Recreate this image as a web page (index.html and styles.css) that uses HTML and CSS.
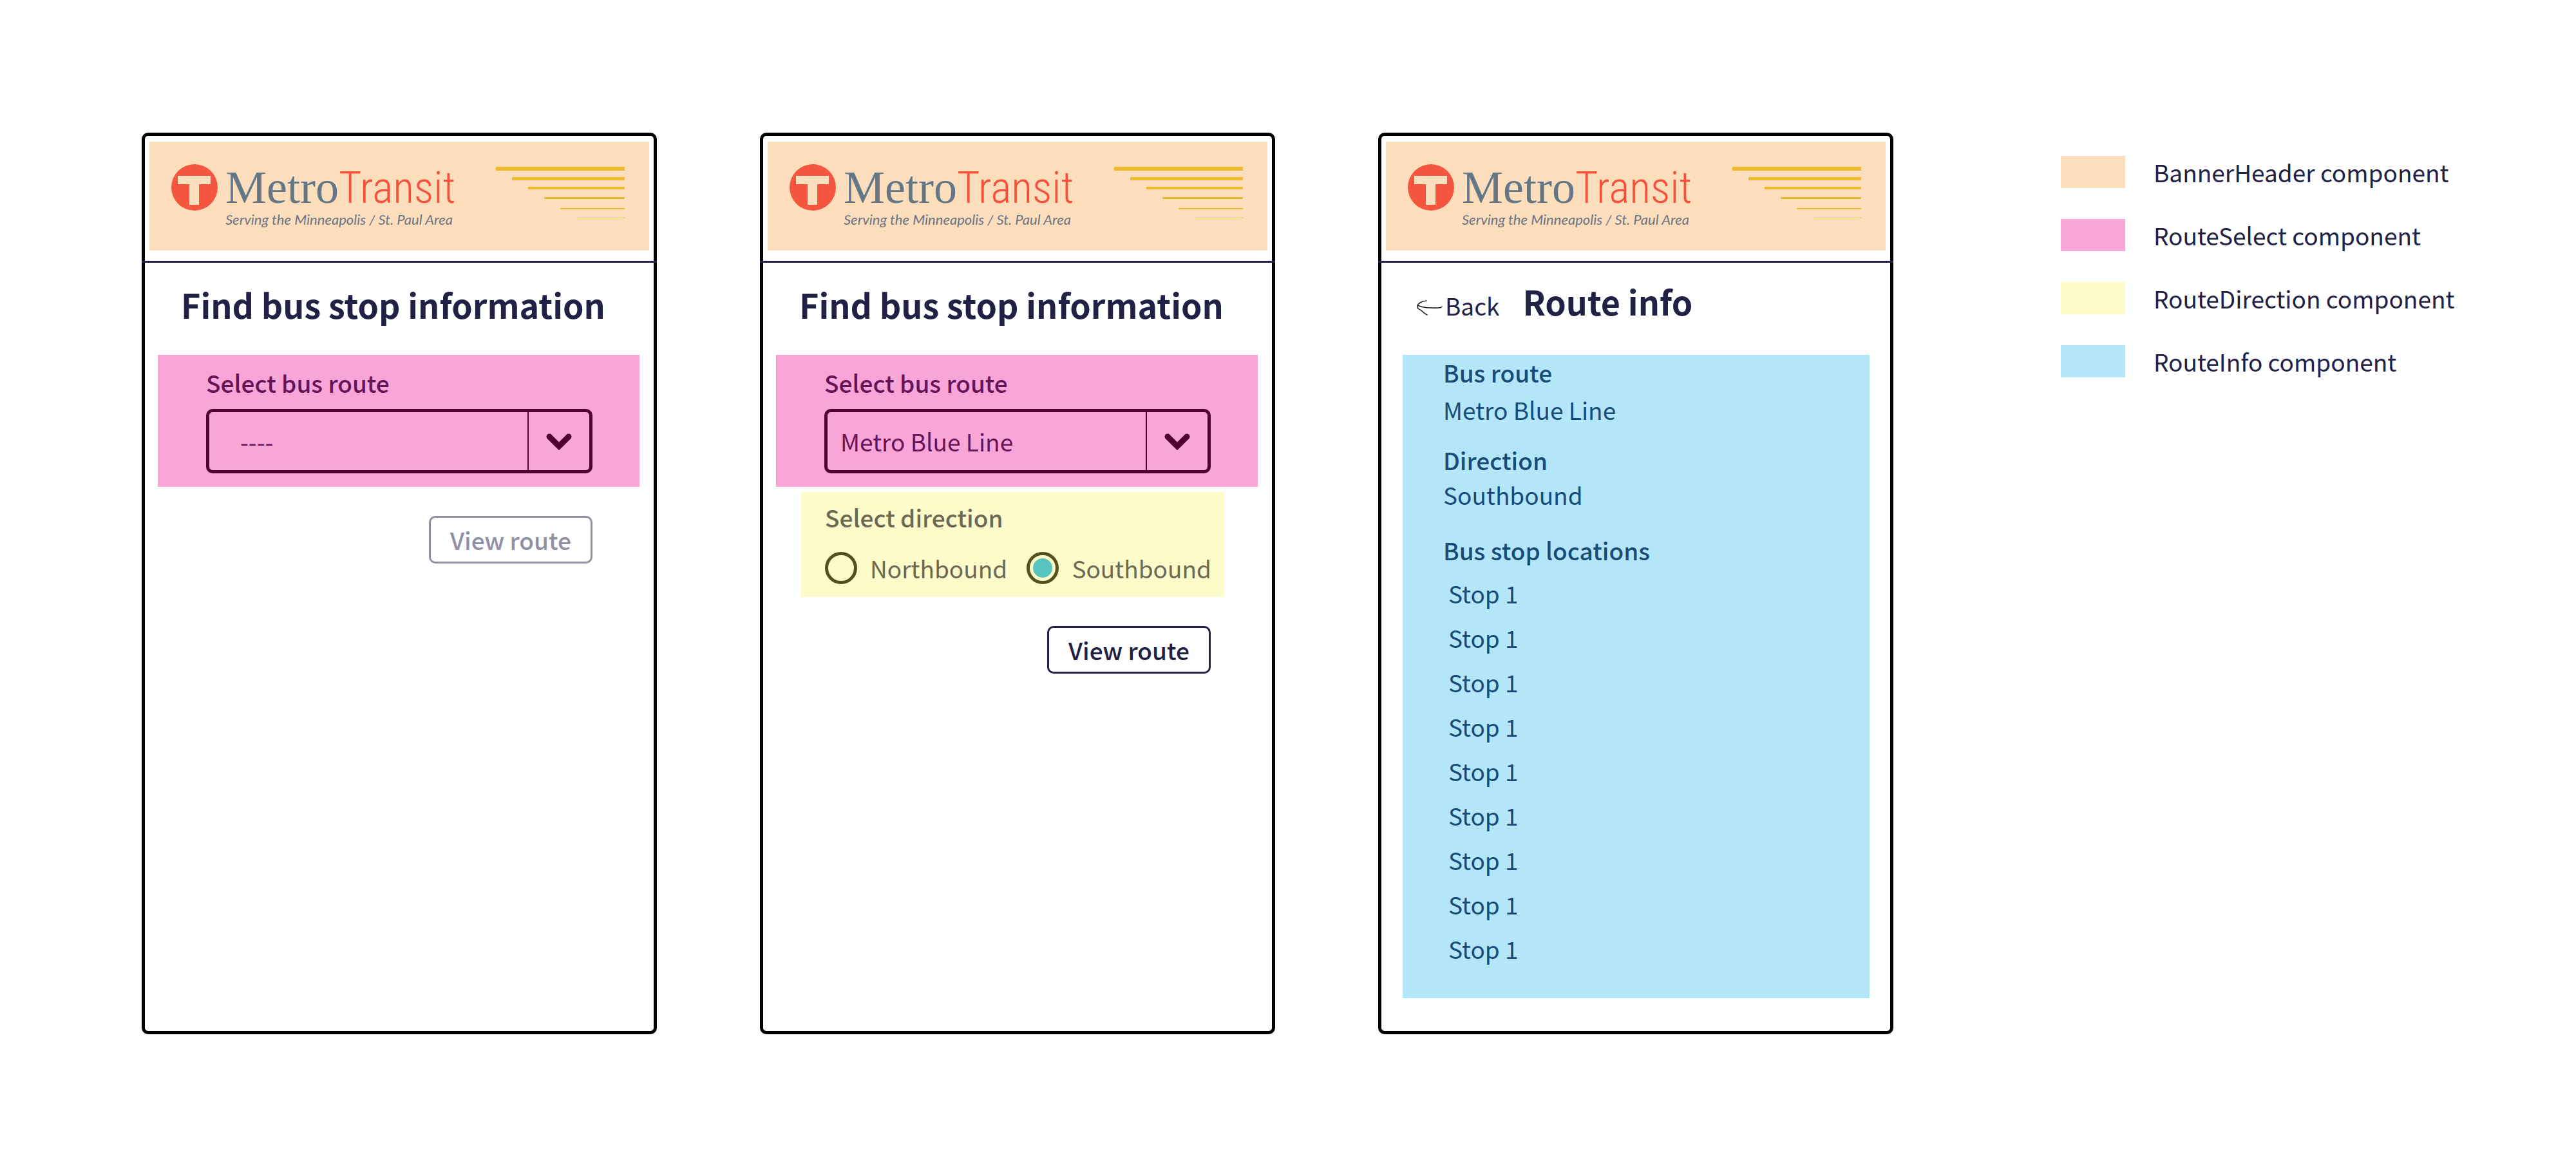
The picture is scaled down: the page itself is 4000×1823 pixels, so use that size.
FILE: index.html
```html
<!DOCTYPE html>
<html lang="en">
<head>
<meta charset="utf-8">
<meta name="viewport" content="width=device-width, initial-scale=1">
<title>Metro Transit wireframes</title>
<link rel="stylesheet" href="styles.css">
</head>
<body>
<svg width="0" height="0" class="sprite" aria-hidden="true">
  <symbol id="mark" viewBox="0 0 72 72">
    <circle cx="36" cy="36" r="36" fill="#f45640"/>
    <path d="M10 18h51v13H43v32H28V31H10z" fill="#fddebc"/>
  </symbol>
  <symbol id="speed" viewBox="0 0 200 80">
    <path d="M0 0h200v6H0zM25 16h175v5H25zM50 31h150v4H50zM75 47h125v3H75zM100 64h100v2H100zM126 79h74v1h-74z" fill="#edb92d"/>
  </symbol>
  <symbol id="chevron" viewBox="0 0 40 28">
    <path d="M5 5l15 15L35 5" fill="none" stroke="#50002d" stroke-width="9" stroke-linecap="round"/>
  </symbol>
</svg>

<main class="board">
  <section class="phone">
    <header class="phone__header">
      <div class="banner">
        <svg class="banner__mark" aria-hidden="true"><use href="#mark"/></svg>
        <div class="banner__text">
          <p class="banner__name"><span class="banner__metro">Metro</span><span class="banner__transit">Transit</span></p>
          <p class="banner__tagline">Serving the Minneapolis / St. Paul Area</p>
        </div>
        <svg class="banner__speed" aria-hidden="true"><use href="#speed"/></svg>
      </div>
    </header>
    <h1 class="title">Find bus stop information</h1>
    <form class="finder">
      <div class="route-select">
        <label class="label" for="route-a">Select bus route</label>
        <div class="picker picker--empty">
          <select class="picker__input" id="route-a"><option>----</option><option>Metro Blue Line</option></select>
          <svg class="picker__icon" aria-hidden="true"><use href="#chevron"/></svg>
        </div>
      </div>
      <button class="button" type="button" disabled>View route</button>
    </form>
  </section>

  <section class="phone">
    <header class="phone__header">
      <div class="banner">
        <svg class="banner__mark" aria-hidden="true"><use href="#mark"/></svg>
        <div class="banner__text">
          <p class="banner__name"><span class="banner__metro">Metro</span><span class="banner__transit">Transit</span></p>
          <p class="banner__tagline">Serving the Minneapolis / St. Paul Area</p>
        </div>
        <svg class="banner__speed" aria-hidden="true"><use href="#speed"/></svg>
      </div>
    </header>
    <h1 class="title">Find bus stop information</h1>
    <form class="finder">
      <div class="route-select">
        <label class="label" for="route-b">Select bus route</label>
        <div class="picker">
          <select class="picker__input" id="route-b"><option>Metro Blue Line</option></select>
          <svg class="picker__icon" aria-hidden="true"><use href="#chevron"/></svg>
        </div>
      </div>
      <fieldset class="route-direction">
        <legend class="label">Select direction</legend>
        <div class="choices">
          <label class="choice"><input class="choice__radio" type="radio" name="direction">Northbound</label>
          <label class="choice"><input class="choice__radio" type="radio" name="direction" checked>Southbound</label>
        </div>
      </fieldset>
      <button class="button" type="button">View route</button>
    </form>
  </section>

  <section class="phone">
    <header class="phone__header">
      <div class="banner">
        <svg class="banner__mark" aria-hidden="true"><use href="#mark"/></svg>
        <div class="banner__text">
          <p class="banner__name"><span class="banner__metro">Metro</span><span class="banner__transit">Transit</span></p>
          <p class="banner__tagline">Serving the Minneapolis / St. Paul Area</p>
        </div>
        <svg class="banner__speed" aria-hidden="true"><use href="#speed"/></svg>
      </div>
    </header>
    <div class="titlebar">
      <a class="back" href="#"><svg class="back__arrow" viewBox="0 0 40 24" aria-hidden="true"><path d="M39 10.500C37 13 30 12 22 12C14 12 7 11 1 8M15 1C8 2 2 5 1 9C0 15 5 13 9 18Q12 21 16 23" fill="none" stroke="#1c1c20" stroke-width="1.600" stroke-linecap="round"/></svg>Back</a>
      <h1 class="titlebar__title">Route info</h1>
    </div>
    <div class="route-info">
      <div class="fact fact--route">
        <h2 class="fact__name">Bus route</h2>
        <p class="fact__value">Metro Blue Line</p>
      </div>
      <div class="fact fact--direction">
        <h2 class="fact__name">Direction</h2>
        <p class="fact__value">Southbound</p>
      </div>
      <div class="fact fact--stops">
        <h2 class="fact__name">Bus stop locations</h2>
        <ul class="stops">
          <li>Stop 1</li>
          <li>Stop 1</li>
          <li>Stop 1</li>
          <li>Stop 1</li>
          <li>Stop 1</li>
          <li>Stop 1</li>
          <li>Stop 1</li>
          <li>Stop 1</li>
          <li>Stop 1</li>
        </ul>
      </div>
    </div>
  </section>

  <ul class="key">
    <li class="key__row"><span class="swatch swatch--banner"></span>BannerHeader component</li>
    <li class="key__row"><span class="swatch swatch--select"></span>RouteSelect component</li>
    <li class="key__row"><span class="swatch swatch--direction"></span>RouteDirection component</li>
    <li class="key__row"><span class="swatch swatch--info"></span>RouteInfo component</li>
  </ul>
</main>
</body>
</html>
```
FILE: styles.css
```css
:root {
  --ink: #202145;
  --peach: #fddebc;
  --pink: #f8a6d7;
  --yellow: #fefbcb;
  --blue: #b4e6fa;
}

* {
  box-sizing: border-box;
}

body,
h1,
h2,
p,
ul,
fieldset {
  margin: 0;
  padding: 0;
}

body {
  background: #fff;
  color: var(--ink);
  font-family: "Noto Sans CJK SC", "Noto Sans", sans-serif;
  font-size: 37px;
  line-height: 50px;
}

h2 {
  font-size: 37px;
  font-weight: 500;
}

ul {
  list-style: none;
}

.sprite {
  display: block;
}

.board {
  display: grid;
  grid-template-columns: 20vw 20vw 20vw 1fr;
  column-gap: 4vw;
  align-items: start;
  padding: 206px 0 206px 220px;
}

.phone {
  min-width: 0;
  aspect-ratio: 4 / 7;
  border: 5px solid #000;
  border-radius: 10px;
}

.phone__header {
  margin: 0 -5px;
  padding: 9px 12px 16px;
  border-bottom: 3px solid var(--ink);
}

/* Banner */
.banner {
  display: flex;
  align-items: flex-start;
  gap: 12px;
  height: 169px;
  padding: 35px 38px 0 34px;
  background: var(--peach);
}

.banner__mark {
  flex: none;
  width: 72px;
  height: 72px;
}

.banner__text {
  flex: 1;
  white-space: nowrap;
}

.banner__name {
  height: 72px;
  line-height: 72px;
}

.banner__metro {
  color: #647786;
  font-family: "Liberation Serif", serif;
  font-size: 72px;
}

.banner__transit {
  color: #f9503a;
  font-family: "Roboto Condensed", Lato, sans-serif;
  font-size: 68px;
  font-weight: 300;
}

.banner__tagline {
  color: #6b7484;
  font-family: Lato, sans-serif;
  font-size: 22px;
  font-style: italic;
  line-height: 28px;
}

.banner__speed {
  flex: none;
  width: 200px;
  height: 80px;
  margin-top: 4px;
}

/* Headings */
.title,
.titlebar__title {
  font-size: 52px;
  font-weight: 700;
  line-height: 72px;
  white-space: nowrap;
}

.title {
  padding: 29px 0 42px 56px;
}

.titlebar {
  display: flex;
  align-items: baseline;
  gap: 36px;
  padding: 24px 0 47px 55px;
}

.back {
  color: inherit;
  text-decoration: none;
}

.back__arrow {
  width: 40px;
  height: 24px;
  margin-right: 4px;
}

/* Route finder form */
.finder {
  display: flex;
  flex-direction: column;
}

.label {
  display: block;
  padding: 0;
  font-weight: 500;
}

.route-select {
  margin: 0 22px 0 20px;
  padding: 18px 73px 21px 75px;
  background: var(--pink);
  color: #661457;
}

.picker {
  display: grid;
  grid-template-columns: 1fr 96px;
  height: 100px;
  margin-top: 16px;
  border: 5px solid #50002d;
  border-radius: 10px;
}

.picker__input {
  grid-area: 1 / 1 / 2 / 3;
  min-width: 0;
  padding: 0 120px 0 20px;
  appearance: none;
  border: 0;
  background: none;
  color: inherit;
  font: inherit;
}

.picker--empty .picker__input {
  padding-left: 48px;
}

.picker__icon {
  grid-area: 1 / 2 / 2 / 3;
  width: 100%;
  height: 90px;
  padding: 33px 0 29px;
  border-left: 2px solid #50002d;
  pointer-events: none;
}

.route-direction {
  min-width: 0;
  margin: 8px 74px 0 59px;
  padding: 14px 0 20px 37px;
  border: 0;
  background: var(--yellow);
  color: #6b6952;
}

.route-direction .label {
  float: left;
  width: 100%;
}

.choices {
  display: flex;
  clear: both;
  justify-content: space-between;
  padding: 29px 20px 0 0;
}

.choice {
  display: flex;
  align-items: center;
  gap: 20px;
}

.choice__radio {
  width: 50px;
  height: 50px;
  margin: 0;
  padding: 5px;
  appearance: none;
  border: 5px solid #55511f;
  border-radius: 50%;
}

.choice__radio:checked {
  background: #58c5c0 content-box;
}

.button {
  align-self: flex-end;
  height: 74px;
  margin: 45px 95px 0 0;
  padding: 0 30px;
  border: 3px solid var(--ink);
  border-radius: 10px;
  background: #fff;
  color: var(--ink);
  font: inherit;
  font-weight: 500;
}

.button:disabled {
  border-color: #8f90a3;
  color: #8f90a3;
}

/* Route info */
.route-info {
  margin: 0 32px 0 33px;
  padding: 2px 63px 42px;
  background: var(--blue);
  color: #164c77;
}

.fact {
  display: flex;
  flex-direction: column;
}

.fact--route {
  gap: 8px;
}

.fact--direction {
  gap: 4px;
  margin-top: 28px;
}

.fact--stops {
  gap: 8px;
  margin-top: 36px;
}

.stops {
  padding-left: 8px;
  line-height: 69px;
}

/* Colour key */
.key {
  display: flex;
  flex-direction: column;
  gap: 48px;
  padding: 36px 0 0 100px;
  white-space: nowrap;
}

.key__row {
  display: flex;
  align-items: center;
  gap: 44px;
}

.swatch {
  width: 100px;
  height: 50px;
}

.swatch--banner {
  background: var(--peach);
}

.swatch--select {
  background: var(--pink);
}

.swatch--direction {
  background: var(--yellow);
}

.swatch--info {
  background: var(--blue);
}
```
